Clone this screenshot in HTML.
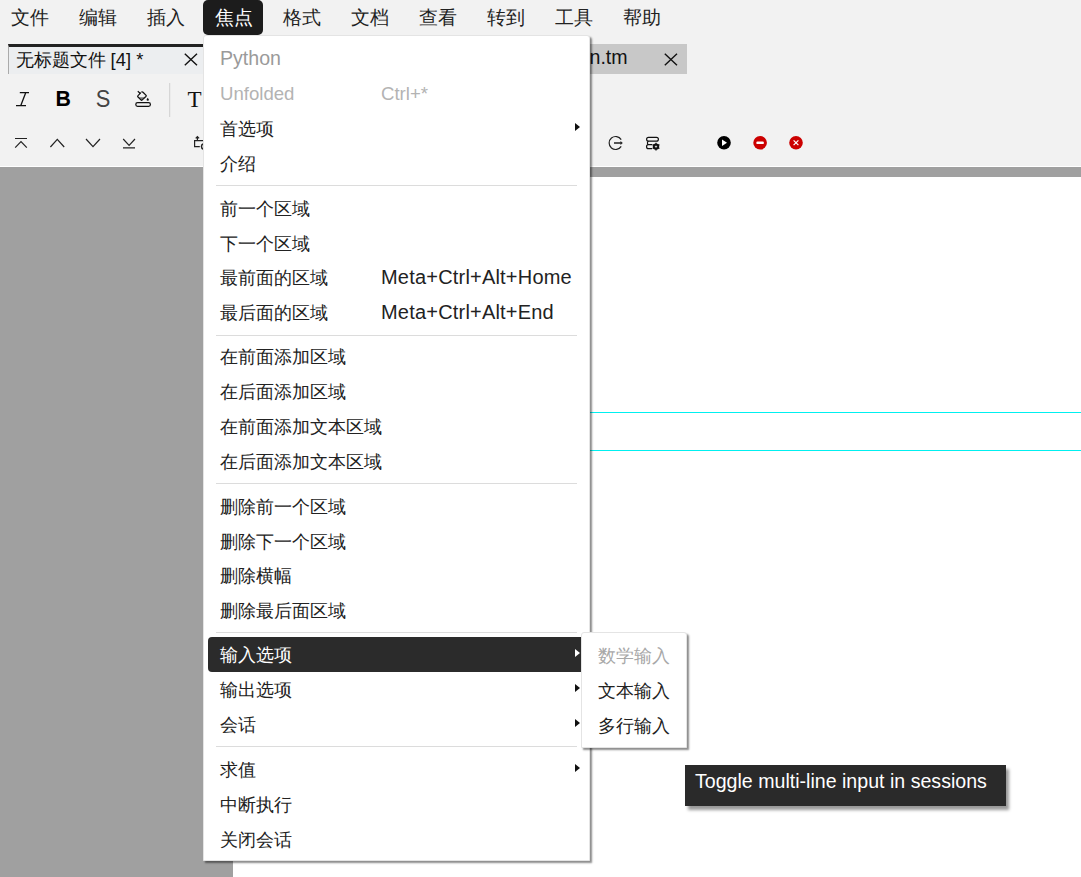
<!DOCTYPE html>
<html><head><meta charset="utf-8">
<style>
*{margin:0;padding:0;box-sizing:border-box}
html,body{width:1081px;height:877px;overflow:hidden;background:#f2f2f2;font-family:"Liberation Sans",sans-serif;color:#1a1a1a}
.abs{position:absolute}
#menubar .mi{position:absolute;top:0;height:35px;line-height:35px;font-size:18.5px;color:#222}
#hl{position:absolute;left:203px;top:0;width:60px;height:35px;background:#1c1c1c;border-radius:5px}
#tab1{position:absolute;left:8px;top:44px;width:200px;height:30px;background:#eceef0;border-top:3px solid #222;border-left:1px solid #aaa}
#tab2{position:absolute;left:420px;top:44px;width:267px;height:30px;background:#c8c8c8}
.tabtxt{position:absolute;font-size:19px;color:#111}
#graybar{position:absolute;left:0;top:167px;width:1081px;height:10px;background:#a0a0a0;border-top:0}
#whiteline{position:absolute;left:0;top:166px;width:1081px;height:1px;background:#fff}
#leftgray{position:absolute;left:0;top:177px;width:234px;height:700px;background:#a0a0a0;border-right:1px solid #5a5a5a}
#page{position:absolute;left:233px;top:177px;width:848px;height:700px;background:#fff}
.cyan{position:absolute;left:233px;width:848px;height:1px;background:#00f0f0}
#menu{position:absolute;left:203px;top:35px;width:387px;height:826px;background:#fff;border-radius:3px 3px 0 0;box-shadow:2px 2px 2px rgba(0,0,0,.45);border:1px solid #e4e4e4}
.it{position:absolute;left:220px;line-height:20px;font-size:18px;color:#222;white-space:nowrap}

.sc{position:absolute;left:382px;line-height:20px;font-size:20px;letter-spacing:.2px;color:#222;white-space:nowrap}
.sep{position:absolute;left:216px;width:361px;height:1px;background:#dcdcdc}
.arr{position:absolute;left:575px;width:0;height:0;border-top:4.5px solid transparent;border-bottom:4.5px solid transparent;border-left:5px solid #222}
#sel{position:absolute;left:208px;top:637px;width:380px;height:35px;background:#2b2b2b;border-radius:4px}
#sub{position:absolute;left:581px;top:632px;width:105.5px;height:116px;background:#fff;border:1px solid #e4e4e4;border-radius:3px 3px 0 0;box-shadow:2px 2px 2px rgba(0,0,0,.45)}
#tip{position:absolute;left:685px;top:765px;width:321px;height:41px;background:#2a2a2a;box-shadow:3px 4px 3px rgba(0,0,0,.4)}
.dis{color:#a8a8a8 !important}
</style></head><body>
<div id="menubar">
 <div id="hl"></div>
 <div class="mi" style="left:11px">文件</div>
 <div class="mi" style="left:79px">编辑</div>
 <div class="mi" style="left:147px">插入</div>
 <div class="mi" style="left:215px;color:#fff">焦点</div>
 <div class="mi" style="left:283px">格式</div>
 <div class="mi" style="left:351px">文档</div>
 <div class="mi" style="left:419px">查看</div>
 <div class="mi" style="left:487px">转到</div>
 <div class="mi" style="left:555px">工具</div>
 <div class="mi" style="left:623px">帮助</div>
</div>
<div id="tab1"><div class="tabtxt" style="left:6.5px;top:-0.5px;font-size:18.4px">无标题文件 [4] *</div><svg class="abs" style="left:175px;top:6px" width="14" height="13"><path d="M0.8 0.8L13 12.2M13 0.8L0.8 12.2" stroke="#111" stroke-width="1.4"/></svg></div>
<div id="tab2"><div class="tabtxt" style="left:169.5px;top:2.2px;font-size:19.6px">n.tm</div><svg class="abs" style="left:244px;top:9px" width="14" height="13"><path d="M0.8 0.8L13 12.2M13 0.8L0.8 12.2" stroke="#111" stroke-width="1.4"/></svg></div>


<svg class="abs" style="left:0;top:80px" width="240" height="80" viewBox="0 80 240 80">
 <g fill="none" stroke="#111" stroke-width="1.3">
  <path d="M19.8 92.6H29M16 105.6H26M25.8 92.6L20.8 105.6"/>
 </g>
 <text x="55.6" y="106.4" font-family="Liberation Sans" font-weight="bold" font-size="22.4" fill="#000" textLength="15.4" lengthAdjust="spacingAndGlyphs">B</text>
 <text x="95.8" y="107" font-family="Liberation Sans" font-size="23.2" fill="#444" textLength="14.6" lengthAdjust="spacingAndGlyphs">S</text>
 <path d="M138.6 97.2L141.6 100L145 97.2Z" fill="#777"/>
 <g fill="none" stroke="#111" stroke-width="1.25" stroke-linejoin="round">
  <rect x="135.8" y="102.7" width="14.6" height="3.6" rx="1.8"/>
  <path d="M141.4 92.2Q142.2 91.4 143 92.2L145.9 95.1Q146.6 95.8 145.9 96.5L142.3 99.9Q141.6 100.6 140.9 99.9L138 97Q137.3 96.3 138 95.6L140.2 93.4"/>
  <path d="M137.8 91.2L140.2 93.4"/>
 </g>
 <circle cx="140.1" cy="93.1" r="0.9" fill="#111"/>
 <path d="M147.7 97.8Q148.9 99.1 148.9 99.7A1.15 1.15 0 0 1 146.6 99.7Q146.6 99.1 147.7 97.8Z" fill="#111"/>
 <rect x="169.2" y="83" width="1" height="34" fill="#cfcfcf"/>
 <text x="187.6" y="106.8" font-family="Liberation Serif" font-size="23" fill="#111">T</text>
 <g fill="none" stroke="#222" stroke-width="1.2">
  <path d="M15 138.5H27M15.2 147.6L21 141.5L26.8 147.6"/>
  <path d="M50.4 147L57.3 139.4L64.2 147"/>
  <path d="M86 139L93 146.6L100 139"/>
  <path d="M123.2 139L129.1 145.3L135 139M123 147.8H135"/>
 </g>
 <g fill="none" stroke="#222" stroke-width="1.2">
  <path d="M197.4 140.2V136.6M195.7 138.3L197.4 136.5L199.1 138.3M204 140.6H194.6V146.6H199.8"/><path d="M203.5 143.8A2.8 2.8 0 0 0 203.5 149.2" stroke-width="1.5"/>
 </g>
</svg>
<svg class="abs" style="left:600px;top:130px" width="220" height="30" viewBox="600 130 220 30">
 <g fill="none" stroke="#222" stroke-width="1.2">
  <path d="M621.2 139.6A6.5 6.5 0 1 0 621.2 146.4"/>
 </g>
 <path d="M614 142.3H620.5V141L622.8 143L620.5 145V143.8H614Z" fill="#222"/>
 <g fill="none" stroke="#111" stroke-width="1.2">
  <rect x="646.6" y="137.3" width="11.8" height="3.9" rx="1.95"/>
  <path d="M652.2 144.7H648.5A1.95 1.95 0 0 1 648.5 141.2M652 148.6H648.5A1.95 1.95 0 0 1 648.5 144.7"/>
 </g>
 <circle cx="656" cy="146.6" r="2.3" fill="none" stroke="#111" stroke-width="1.8"/>
 <g stroke="#111" stroke-width="1.3"><path d="M656 142.7V150.5M652.6 144.65L659.4 148.55M652.6 148.55L659.4 144.65"/></g>
 <circle cx="656" cy="146.6" r="0.9" fill="#f2f2f2"/>
 <circle cx="724" cy="142.8" r="6.8" fill="#000"/>
 <path d="M722 139.6L727 142.8L722 146Z" fill="#fff"/>
 <circle cx="760.1" cy="142.8" r="6.8" fill="#cc0000"/>
 <rect x="756.3" y="141.5" width="7.6" height="2.6" rx="1.2" fill="#fff"/>
 <circle cx="796" cy="142.8" r="6.8" fill="#cc0000"/>
 <path d="M793.6 140.4L798.4 145.2M798.4 140.4L793.6 145.2" stroke="#fff" stroke-width="1.2"/>
</svg>
<div id="whiteline"></div>
<div id="graybar"></div>
<div id="leftgray"></div>
<div id="page"></div>
<div class="cyan" style="top:412px"></div>
<div class="cyan" style="top:450px"></div>

<div id="menu"></div>
<div id="sel"></div>
<div class="it" style="top:47.5px;font-size:19.6px;color:#9a9a9a">Python</div>
<div class="it" style="top:83.5px;font-size:18.6px;color:#b3b3b3">Unfolded</div>
<div class="sc" style="left:381px;top:83.5px;font-size:18.6px;letter-spacing:0;color:#b3b3b3">Ctrl+*</div>
<div class="sep" style="top:185px"></div>
<div class="sep" style="top:335px"></div>
<div class="sep" style="top:483px"></div>
<div class="sep" style="top:632px"></div>
<div class="sep" style="top:746px"></div>
<div class="it" style="top:119px">首选项</div>
<div class="arr" style="top:123px;border-left-color:#111"></div>
<div class="it" style="top:154px">介绍</div>
<div class="it" style="top:199px">前一个区域</div>
<div class="it" style="top:234px">下一个区域</div>
<div class="it" style="top:268px">最前面的区域</div>
<div class="sc" style="left:381px;top:267px">Meta+Ctrl+Alt+Home</div>
<div class="it" style="top:303px">最后面的区域</div>
<div class="sc" style="left:381px;top:302px">Meta+Ctrl+Alt+End</div>
<div class="it" style="top:347px">在前面添加区域</div>
<div class="it" style="top:382px">在后面添加区域</div>
<div class="it" style="top:417px">在前面添加文本区域</div>
<div class="it" style="top:452px">在后面添加文本区域</div>
<div class="it" style="top:497px">删除前一个区域</div>
<div class="it" style="top:532px">删除下一个区域</div>
<div class="it" style="top:566px">删除横幅</div>
<div class="it" style="top:601px">删除最后面区域</div>
<div class="it" style="top:645px;color:#fff">输入选项</div>
<div class="arr" style="top:649px;border-left-color:#fff"></div>
<div class="it" style="top:680px">输出选项</div>
<div class="arr" style="top:684px;border-left-color:#111"></div>
<div class="it" style="top:715px">会话</div>
<div class="arr" style="top:719px;border-left-color:#111"></div>
<div class="it" style="top:760px">求值</div>
<div class="arr" style="top:764px;border-left-color:#111"></div>
<div class="it" style="top:795px">中断执行</div>
<div class="it" style="top:830px">关闭会话</div>
<div id="sub"></div>
<div class="it dis" style="left:598px;top:646px">数学输入</div>
<div class="it" style="left:598px;top:681px">文本输入</div>
<div class="it" style="left:598px;top:716px">多行输入</div>
<div id="tip"><div class="abs" style="left:10px;top:6px;font-size:19.6px;line-height:20px;color:#fff;white-space:nowrap">Toggle multi-line input in sessions</div></div>
</body></html>
